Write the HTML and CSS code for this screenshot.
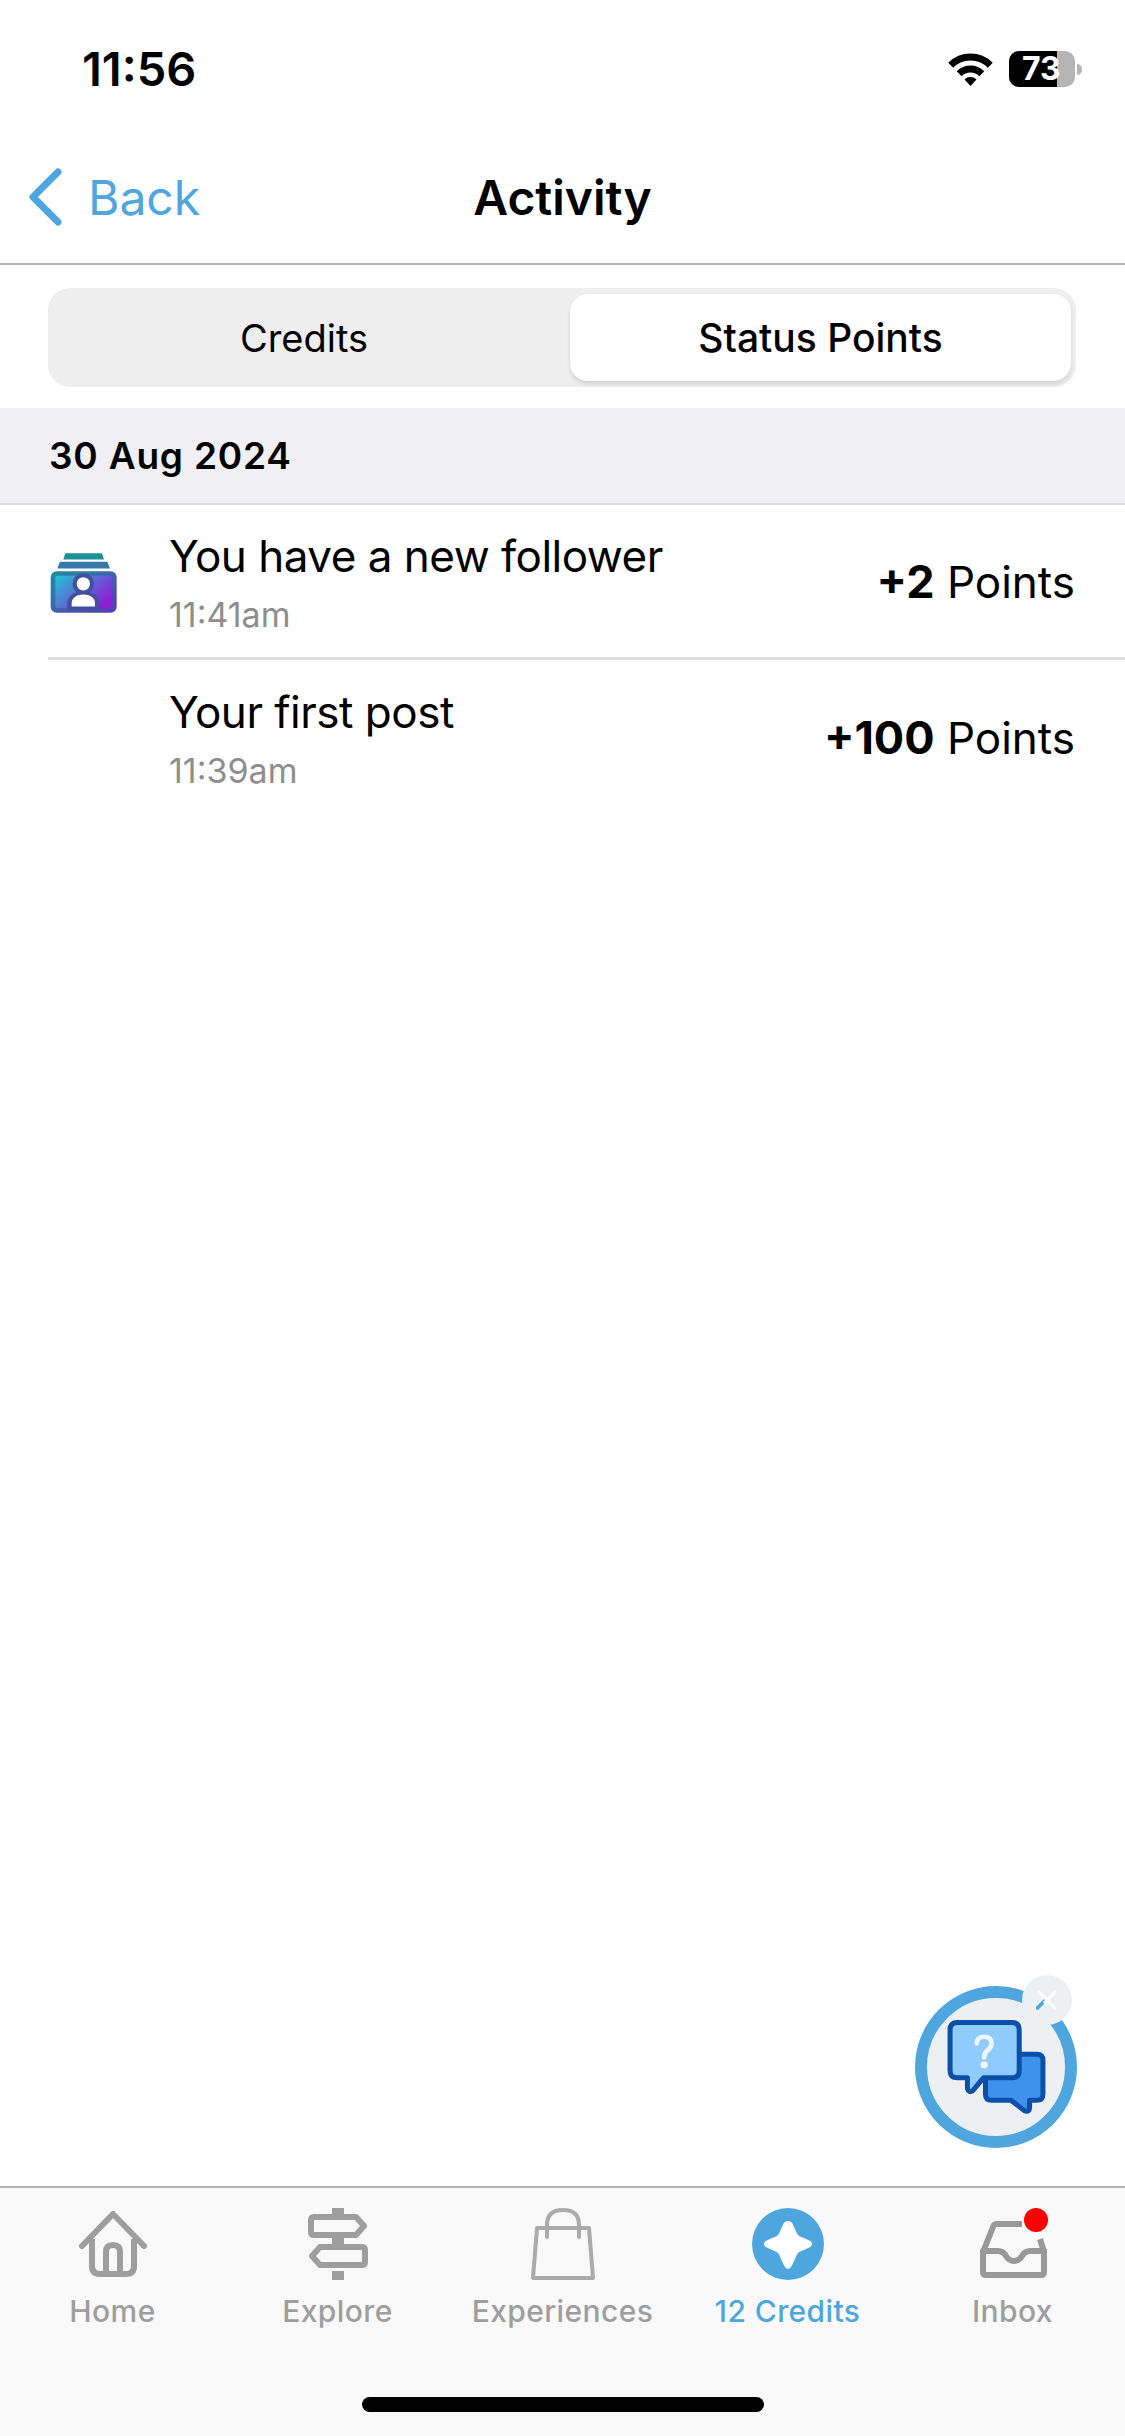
FILE: index.html
```html
<!DOCTYPE html>
<html lang="en">
<head>
    <meta charset="UTF-8">
    <meta name="viewport" content="width=device-width, initial-scale=1.0">
    <title>Activity</title>
    <link rel="stylesheet" href="styles.css">
</head>
<body>
    <div class="status-bar">
        <span class="clock">11:56</span>
        <div class="status-icons">
            <svg class="wifi" viewBox="0 0 45 33">
                <path d="M2.7 12.2a28 28 0 0 1 39.6 0" fill="none" stroke="#000" stroke-width="7"/>
                <path d="M11.2 20.7a16 16 0 0 1 22.6 0" fill="none" stroke="#000" stroke-width="7"/>
                <path d="M16.5 26.5a8.5 8.5 0 0 1 12 0L22.5 33z" fill="#000"/>
            </svg>
            <div class="battery"><span class="battery-level"></span><span class="battery-text">73</span></div>
            <span class="battery-nub"></span>
        </div>
    </div>

    <div class="nav-bar">
        <a class="back-link" href="#">
            <svg class="back-icon" viewBox="0 0 36 58">
                <path d="M31 4L6 29l25 25" fill="none" stroke="#4fa6de" stroke-width="7" stroke-linecap="round" stroke-linejoin="round"/>
            </svg>
            <span>Back</span>
        </a>
        <h1 class="nav-title">Activity</h1>
    </div>

    <div class="segments">
        <button class="segment">Credits</button>
        <button class="segment active">Status Points</button>
    </div>

    <div class="date-header">30 Aug 2024</div>

    <div class="activity-row">
        <svg class="activity-icon" viewBox="60 60 204 188">
            <defs>
                <linearGradient id="cardEdge" x1="0" y1="0" x2="1" y2="1">
                    <stop offset="0" stop-color="#1f8f9f"/>
                    <stop offset="1" stop-color="#5f36b8"/>
                </linearGradient>
                <linearGradient id="cardFill" x1="0" y1="0" x2="1" y2="0.6">
                    <stop offset="0" stop-color="#22c4d4"/>
                    <stop offset="1" stop-color="#8c20d6"/>
                </linearGradient>
            </defs>
            <path d="M106 66h110l6 19H100z" fill="#1f9196"/>
            <path d="M90 92h142l8 20H82z" fill="#3479a8"/>
            <rect x="62" y="120" width="198" height="125" rx="18" fill="url(#cardEdge)"/>
            <rect x="76" y="134" width="170" height="97" rx="6" fill="url(#cardFill)"/>
            <circle cx="160" cy="158" r="32" fill="#41509f"/>
            <path d="M112 238v-20c0-24 20-38 48-38s48 14 48 38v20z" fill="#41509f"/>
            <circle cx="160" cy="158" r="20" fill="#fff"/>
            <path d="M125 226v-10c0-16 16-26 35-26s35 10 35 26v10z" fill="#fff"/>
        </svg>
        <div class="activity-text">
            <div class="activity-title">You have a new follower</div>
            <div class="activity-time">11:41am</div>
        </div>
        <div class="activity-points"><b>+2</b> Points</div>
    </div>
    <div class="activity-row second">
        <div class="activity-text">
            <div class="activity-title">Your first post</div>
            <div class="activity-time">11:39am</div>
        </div>
        <div class="activity-points"><b>+100</b> Points</div>
    </div>

    <div class="spacer"></div>

    <div class="help-fab">
        <svg class="help-art" viewBox="105 108 485 485">
            <path d="M330 312h140q18 0 18 18v102q0 18-18 18h-22v22q0 14-14 10l-42-32H334q-18 0-18-18v-102q0-18 14-18z" fill="#3f92ec" stroke="#0b50a8" stroke-width="15" stroke-linejoin="round"/>
            <path d="M230 217h165q22 0 22 22v122q0 22-22 22H310l-32 38q-12 8-16-6v-32h-30q-22 0-22-22V239q0-22 22-22z" fill="#8fcbfd" stroke="#0b50a8" stroke-width="15" stroke-linejoin="round"/>
            <path d="M290 280q0-20 22-20t22 20q0 12-11 20t-11 22" fill="none" stroke="#eef5fb" stroke-width="14" stroke-linecap="round"/>
            <circle cx="312" cy="344" r="11" fill="#eef5fb"/>
        </svg>
        <div class="help-close">
            <svg class="help-close-icon" viewBox="0 0 30 30">
                <path d="M2 26L12 16" stroke="#4fa6de" stroke-width="5" stroke-linecap="round"/>
                <path d="M4 4l22 22M26 4L12 18" stroke="#fff" stroke-width="4" stroke-linecap="round"/>
            </svg>
        </div>
    </div>

    <nav class="tab-bar">
        <div class="tab">
            <div class="tab-icon">
                <svg class="icon-home" viewBox="0 0 70 66">
                    <path d="M4 35L35 3l31 32" fill="none" stroke="#9e9e9e" stroke-width="6" stroke-linecap="round" stroke-linejoin="round"/>
                    <path d="M14 28v27q0 8 8 8h26q8 0 8-8V28" fill="none" stroke="#9e9e9e" stroke-width="6"/>
                    <path d="M28 63V41q0-7 7-7t7 7v22" fill="none" stroke="#9e9e9e" stroke-width="6"/>
                </svg>
            </div>
            <span class="tab-label">Home</span>
        </div>
        <div class="tab">
            <div class="tab-icon">
                <svg class="icon-explore" viewBox="0 0 60 72">
                    <rect x="24" y="0" width="12" height="7" fill="#9e9e9e"/>
                    <path d="M6 9h42l8 9-8 9H6q-3 0-3-3V12q0-3 3-3z" fill="none" stroke="#9e9e9e" stroke-width="6" stroke-linejoin="round"/>
                    <rect x="24" y="29" width="12" height="8" fill="#9e9e9e"/>
                    <path d="M12 39h42q3 0 3 3v12q0 3-3 3H12l-8-9z" fill="none" stroke="#9e9e9e" stroke-width="6" stroke-linejoin="round"/>
                    <rect x="24" y="63" width="12" height="9" fill="#9e9e9e"/>
                </svg>
            </div>
            <span class="tab-label">Explore</span>
        </div>
        <div class="tab">
            <div class="tab-icon">
                <svg class="icon-bag" viewBox="0 0 64 72">
                    <path d="M6 20h52l4 50H2z" fill="none" stroke="#ababab" stroke-width="4" stroke-linejoin="round"/>
                    <path d="M16 29V17q0-15 16-15t16 15v12" fill="none" stroke="#ababab" stroke-width="4" stroke-linecap="round"/>
                </svg>
            </div>
            <span class="tab-label">Experiences</span>
        </div>
        <div class="tab active">
            <div class="tab-icon">
                <svg class="icon-credits" viewBox="0 0 72 72">
                    <circle cx="36" cy="36" r="36" fill="#4fa6de"/>
                    <path d="M36 14q3 0 4 3l4 9q2 3 5 4l9 4q2 2 0 4l-9 4q-3 1-5 4l-4 9q-2 5-4 5t-4-5l-4-9q-2-3-5-4l-9-4q-2-2 0-4l9-4q3-1 5-4l4-9q1-3 4-3z" fill="#fff" stroke="#fff" stroke-width="2" stroke-linejoin="round"/>
                </svg>
            </div>
            <span class="tab-label">12 Credits</span>
        </div>
        <div class="tab">
            <div class="tab-icon">
                <svg class="icon-inbox" viewBox="0 0 70 60">
                    <path d="M44 5H19q-3 0-4 3L5 33" fill="none" stroke="#999" stroke-width="6"/>
                    <path d="M62 20l4 13" fill="none" stroke="#999" stroke-width="6"/>
                    <path d="M5 32h15q5 0 8 5 3 5 8 5t8-5q3-5 8-5h14v21q0 3-3 3H8q-3 0-3-3z" fill="none" stroke="#999" stroke-width="6" stroke-linejoin="round"/>
                </svg>
                <span class="inbox-dot"></span>
            </div>
            <span class="tab-label">Inbox</span>
        </div>
    </nav>
    <div class="home-strip"><span class="home-indicator"></span></div>
</body>
</html>
```

FILE: styles.css
```css
* {
    box-sizing: border-box;
}
body {
    font-family: Inter, "Liberation Sans", sans-serif;
    background-color: #fff;
    color: #000;
    margin: 0;
    padding: 0;
    width: 1125px;
    height: 2436px;
    display: flex;
    flex-direction: column;
    position: relative;
    overflow: hidden;
}
.status-bar {
    height: 100px;
    padding: 42px 43px 0 82px;
    display: flex;
    justify-content: space-between;
    align-items: flex-start;
}
.clock {
    font-size: 47px;
    line-height: 54px;
    font-weight: 600;
}
.status-icons {
    display: flex;
    align-items: center;
    margin-top: 9px;
}
.wifi {
    width: 45px;
    height: 33px;
    margin-right: 16px;
}
.battery {
    width: 66px;
    height: 36px;
    border-radius: 10px;
    background: #b5b5b5;
    position: relative;
}
.battery-level {
    position: absolute;
    left: 0;
    top: 0;
    bottom: 0;
    width: 48px;
    background: #000;
    border-radius: 10px 0 0 10px;
}
.battery-text {
    position: absolute;
    left: 13px;
    top: 0;
    color: #fff;
    font-size: 32px;
    line-height: 36px;
    font-weight: 700;
}
.battery-nub {
    width: 5px;
    height: 11px;
    margin-left: 2px;
    background: #b5b5b5;
    border-radius: 0 6px 6px 0;
}
.nav-bar {
    height: 165px;
    border-bottom: 2px solid #b4b4b4;
    display: flex;
    align-items: center;
    justify-content: center;
    position: relative;
    padding-top: 31px;
}
.back-link {
    position: absolute;
    left: 27px;
    top: 31px;
    height: 132px;
    display: flex;
    align-items: center;
    gap: 25px;
    color: #4fa6de;
    font-size: 48px;
    text-decoration: none;
}
.back-icon {
    width: 36px;
    height: 58px;
}
.nav-title {
    margin: 0;
    font-size: 48px;
    font-weight: 600;
}
.segments {
    margin: 23px 49px 0 48px;
    height: 99px;
    background: #eee;
    border-radius: 22px;
    display: flex;
    padding: 6px 5px 6px 0;
}
.segment {
    flex: 1;
    border: none;
    background: none;
    font-family: inherit;
    font-size: 38px;
    font-weight: 400;
    color: #000;
    padding: 0;
}
.segment:first-child {
    flex: 0 0 512px;
    margin-right: 10px;
}
.segment.active {
    background: #fff;
    border-radius: 18px;
    box-shadow: 0 3px 4px rgba(0, 0, 0, 0.12);
    font-size: 39px;
    font-weight: 500;
}
.date-header {
    margin-top: 21px;
    height: 97px;
    padding: 0 49px;
    background: #efeff4;
    border-bottom: 2px solid #dcdcdc;
    display: flex;
    align-items: center;
    font-size: 37px;
    font-weight: 600;
    letter-spacing: 0.8px;
}
.activity-row {
    margin-left: 48px;
    height: 155px;
    padding: 25px 50px 0 0;
    display: flex;
    align-items: flex-start;
    border-bottom: 3px solid #dedede;
    position: relative;
}
.activity-row.second {
    padding-left: 121px;
    padding-top: 26px;
    border-bottom: none;
}
.activity-icon {
    width: 68px;
    height: 63px;
    margin: 21px 0 0 2px;
    flex: none;
}
.activity-text {
    flex: 1;
    padding-left: 51px;
}
.activity-row.second .activity-text {
    padding-left: 0;
}
.activity-title {
    font-size: 44px;
    line-height: 52px;
    letter-spacing: -0.5px;
}
.activity-time {
    font-size: 34px;
    line-height: 38px;
    margin-top: 14px;
    color: #8e8e8e;
}
.activity-points {
    font-size: 44px;
    line-height: 52px;
    margin-top: 26px;
}
.activity-points b {
    font-size: 45px;
    font-weight: 700;
}
.spacer {
    flex: 1;
}
.help-fab {
    position: absolute;
    left: 915px;
    top: 1986px;
    width: 162px;
    height: 162px;
    border-radius: 50%;
    border: 12px solid #4fa6de;
    background: #edf0f2;
}
.help-art {
    position: absolute;
    left: -12px;
    top: -12px;
    width: 162px;
    height: 162px;
}
.help-close {
    position: absolute;
    left: 95px;
    top: -23px;
    width: 50px;
    height: 50px;
    border-radius: 50%;
    background: #edf0f2;
    display: flex;
    align-items: center;
    justify-content: center;
}
.help-close-icon {
    width: 22px;
    height: 22px;
}
.tab-bar {
    height: 191px;
    background: #f9f9f9;
    border-top: 2px solid #b4b4b4;
    display: grid;
    grid-template-columns: repeat(5, 1fr);
    padding-top: 20px;
    flex: none;
}
.tab {
    display: flex;
    flex-direction: column;
    align-items: center;
    color: #9e9e9e;
}
.tab.active {
    color: #4fa6de;
}
.tab-icon {
    height: 72px;
    width: 72px;
    display: flex;
    align-items: center;
    justify-content: center;
    position: relative;
}
.tab-label {
    font-size: 30px;
    line-height: 36px;
    margin-top: 13px;
    letter-spacing: 0.4px;
    white-space: nowrap;
    font-weight: 500;
}
.icon-home {
    width: 70px;
    height: 66px;
}
.icon-explore {
    width: 60px;
    height: 72px;
}
.icon-bag {
    width: 64px;
    height: 72px;
}
.icon-credits {
    width: 72px;
    height: 72px;
}
.icon-inbox {
    width: 70px;
    height: 60px;
    margin-top: 9px;
}
.inbox-dot {
    position: absolute;
    left: 47px;
    top: 0;
    width: 24px;
    height: 24px;
    border-radius: 50%;
    background: #f00;
}
.home-strip {
    height: 59px;
    background: #f9f9f9;
    display: flex;
    justify-content: center;
    flex: none;
}
.home-indicator {
    width: 402px;
    height: 15px;
    margin-top: 20px;
    background: #000;
    border-radius: 8px;
}
```
